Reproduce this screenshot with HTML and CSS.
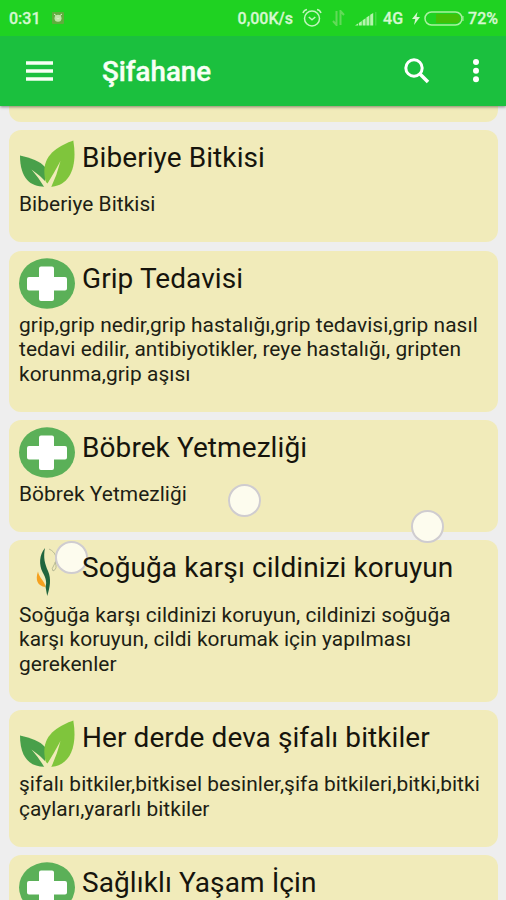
FILE: index.html
```
<!DOCTYPE html>
<html lang="tr">
<head>
<meta charset="utf-8">
<title>Şifahane</title>
<link rel="stylesheet" href="styles.css">
</head>
<body>
<svg class="defs" width="0" height="0">
  <defs>
    <symbol id="leaf" viewBox="0 0 56 51">
      <path fill="#48a04a" d="M1 18.500C12 21 21 24 26 30V49.700C12 50 1 42 1 18.500Z"/>
      <path fill="#7fc53c" d="M54.300 3.500C42 8 25.300 16 25.300 34C25.300 40 26.500 45 28 49.700H33C52 48 58.500 28 54.300 3.500Z"/>
      <path fill="#f1ebba" d="M12.500 32.500Q22 39 28.500 46.500Q35 36 41.500 24Q38 38 32 50.500H25.500Q20 41 12.500 32.500Z"/>
    </symbol>
    <symbol id="cross" viewBox="0 0 56 51">
      <ellipse cx="28" cy="25.500" rx="28" ry="25.300" fill="#5bb058"/>
      <path fill="#fff" d="M22 8.500H33Q35 8.500 35 10.500V19H46Q48 19 48 21V30.500Q48 32.500 46 32.500H35V41Q35 43 33 43H22Q20 43 20 41V32.500H10Q8 32.500 8 30.500V21Q8 19 10 19H20V10.500Q20 8.500 22 8.500Z"/>
    </symbol>
    <symbol id="flame" viewBox="0 0 56 51">
      <path fill="#20653e" d="M26 1C20 8 20 18 23.500 25C27 31 28 36 26.500 39.500L28.200 49C31 40 32.500 32 29 24C26 17 24 11 26 1Z"/>
      <path fill="#f5a11f" d="M19 24.500C16 33 18.500 39 26.500 40C26 34 20 31 19 24.500Z"/>
      <path fill="none" stroke="#a9ad8b" stroke-width=".8" d="M30 2C37 5 39 12 35 18Q32 22 34 24Q39 22 36 15"/>
    </symbol>
  </defs>
</svg>
<div class="screen">
  <header class="top">
    <div class="status">
      <span class="time">0:31</span>
      <svg class="notif" width="12" height="12" viewBox="0 0 12 12"><rect width="12" height="12" rx="1" fill="#76a047" opacity=".75"/><circle cx="6" cy="6.300" r="3.500" fill="#bde3a6"/><path d="M2 2l2 1.500M10 2L8 3.500M4.500 6l1.500 1 1.500-1" stroke="#d5efc4" fill="none"/></svg>
      <span class="rate">0,00K/s</span>
      <svg class="alarm" width="20" height="20" viewBox="0 0 20 20" fill="none" stroke="#c2f5bd" stroke-width="1.500"><circle cx="10" cy="10.500" r="7.500"/><path d="M1 5Q2 2 5 1.500M15 1.500Q18 2 19 5M6.800 9L10 11.800L13.300 9"/></svg>
      <svg class="data" width="13" height="16" viewBox="0 0 13 16" fill="none" stroke="#62da58" stroke-width="2"><path d="M4.500 1V15L1 11M8.500 15V1L12 5"/></svg>
      <svg class="signal" width="22" height="15" viewBox="0 0 22 15" fill="#b5f4ad"><path d="M0 14.500L3 12.500V14.500ZM3.800 12l3-2v4.500h-3ZM7.600 9.300l3-2v7.200h-3ZM11.400 6.500l3-2v10h-3ZM15.200 3.700L18.200 2v12.500h-3Z"/><path opacity=".25" d="M20 1h1.500v13.500H20Z"/></svg>
      <span class="net">4G</span>
      <svg class="bolt" width="8" height="13" viewBox="0 0 8 13"><path fill="#d5f8d0" d="M5.500 0L0 7H3.300L2 13L8 5H4.500Z"/></svg>
      <svg class="battery" width="40" height="15" viewBox="0 0 40 15"><rect x="1" y="1" width="37" height="13" rx="6.500" fill="none" stroke="#aaf2a0" stroke-width="1.500"/><path fill="#43bf08" d="M12 3H32Q36 3 36 7.500Q36 12 32 12H12Z"/><path d="M39 5v5" stroke="#aaf2a0"/></svg>
      <span class="pct">72%</span>
    </div>
    <div class="bar">
      <svg class="menu" width="27" height="20" viewBox="0 0 27 20"><path d="M0 2H27M0 10H27M0 18H27" stroke="#f7fff5" stroke-width="3.400"/></svg>
      <h1 class="name">Şifahane</h1>
      <svg class="search" width="26" height="26" viewBox="0 0 26 26" fill="none" stroke="#fff" stroke-width="3"><circle cx="10" cy="10" r="8.200"/><path stroke-width="3.600" d="M15.500 15.500L24 24"/></svg>
      <svg class="more" width="6" height="24" viewBox="0 0 6 24" fill="#fff"><circle cx="3" cy="3" r="3"/><circle cx="3" cy="11.700" r="3"/><circle cx="3" cy="20.300" r="3"/></svg>
    </div>
  </header>
  <main class="list">
    <article class="card card-prev"></article>
    <article class="card">
      <div class="head"><svg class="icon"><use href="#leaf"/></svg><h2 class="title">Biberiye Bitkisi</h2></div>
      <p class="text">Biberiye Bitkisi</p>
    </article>
    <article class="card">
      <div class="head"><svg class="icon"><use href="#cross"/></svg><h2 class="title">Grip Tedavisi</h2></div>
      <p class="text">grip,grip nedir,grip hastalığı,grip tedavisi,grip nasıl<br>tedavi edilir, antibiyotikler, reye hastalığı, gripten<br>korunma,grip aşısı</p>
    </article>
    <article class="card">
      <div class="head"><svg class="icon"><use href="#cross"/></svg><h2 class="title">Böbrek Yetmezliği</h2></div>
      <p class="text">Böbrek Yetmezliği</p>
      <i class="dot dot-mid"></i><i class="dot dot-right"></i>
    </article>
    <article class="card">
      <div class="head"><svg class="icon"><use href="#flame"/></svg><h2 class="title">Soğuğa karşı cildinizi koruyun</h2></div>
      <p class="text">Soğuğa karşı cildinizi koruyun, cildinizi soğuğa<br>karşı koruyun, cildi korumak için yapılması<br>gerekenler</p>
      <i class="dot dot-left"></i>
    </article>
    <article class="card">
      <div class="head"><svg class="icon"><use href="#leaf"/></svg><h2 class="title">Her derde deva şifalı bitkiler</h2></div>
      <p class="text">şifalı bitkiler,bitkisel besinler,şifa bitkileri,bitki,bitki<br>çayları,yararlı bitkiler</p>
    </article>
    <article class="card">
      <div class="head"><svg class="icon"><use href="#cross"/></svg><h2 class="title">Sağlıklı Yaşam İçin</h2></div>
    </article>
  </main>
</div>
</body>
</html>
```
FILE: styles.css
```
* { box-sizing: border-box; }
body { margin: 0; font-family: Roboto, "Liberation Sans", sans-serif; background: #eee; }
h1, h2, p { margin: 0; font-weight: 400; }
svg { display: block; flex: none; }
.defs { display: none; }
.screen { height: 900px; overflow: hidden; display: flex; flex-direction: column; }
.top { flex: none; position: relative; z-index: 4; box-shadow: 0 1px 3px rgba(0, 0, 0, .45); }
.status { height: 36px; background: #1fd222; display: flex; align-items: center; padding: 0 8px 0 9px; color: #d5f8d0; font-size: 16px; font-weight: 500; white-space: nowrap; -webkit-text-stroke: .3px #d5f8d0; }
.notif { margin-left: 11px; }
.rate { margin-left: auto; }
.alarm { margin-left: 9px; }
.data { margin-left: 10px; }
.signal { margin-left: 10px; }
.net { margin-left: 6px; }
.bolt { margin-left: 9px; }
.battery { margin-left: 4px; }
.pct { margin-left: 4px; }
.bar { height: 70px; background: #1bc03e; display: flex; align-items: center; padding: 0 27px 0 26px; }
.name { margin-left: 49px; padding-top: 1px; color: #f7fff5; font-size: 27.7px; font-weight: 500; line-height: 36px; -webkit-text-stroke: .4px #f7fff5; }
.search { margin-left: auto; }
.more { margin-left: 43px; }
.list { display: flex; flex-direction: column; gap: 8.5px; padding: 0 8px 0 9px; }
.card { flex: none; position: relative; background: #f1ebba; border-radius: 12px; padding: 7px 10px 24.8px; }
.card-prev { height: 70px; margin-top: -54.200px; padding: 0; }
.head { display: flex; height: 55.100px; }
.icon { width: 56px; height: 51px; }
.title { position: relative; z-index: 2; margin-left: 7px; padding-top: 1px; font-size: 28px; letter-spacing: .08px; line-height: 40px; color: #16140c; white-space: nowrap; }
.text { font-size: 20.9px; letter-spacing: .06px; line-height: 24.8px; color: #201e14; white-space: nowrap; }
.dot { position: absolute; z-index: 1; width: 33px; height: 33px; border-radius: 50%; border: 2px solid #cfccd0; background: #fdfcee; }
.dot-mid { left: 219px; top: 64px; }
.dot-right { left: 402px; top: 90px; }
.dot-left { left: 46px; top: 1px; }
.card:last-child { height: 112px; }
```
